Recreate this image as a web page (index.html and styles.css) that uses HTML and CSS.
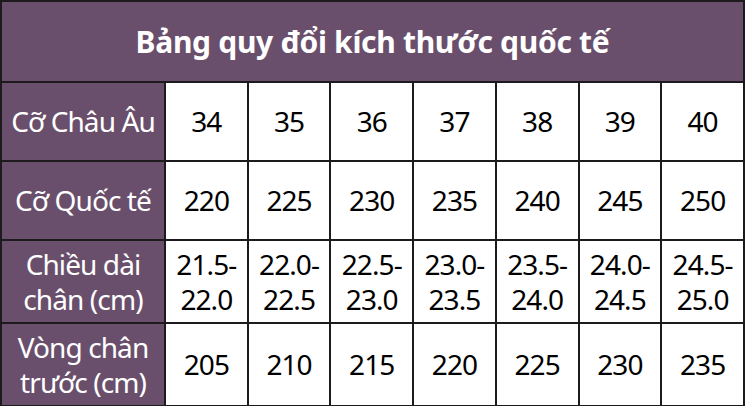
FILE: index.html
```html
<!DOCTYPE html>
<html lang="vi">
<head>
<meta charset="utf-8">
<link rel="stylesheet" href="styles.css">
</head>
<body>
<table class="size-table">
  <colgroup>
    <col class="col-label">
    <col><col><col><col><col><col><col>
  </colgroup>
  <tr class="row-title">
    <th colspan="8" class="title">Bảng quy đổi kích thước quốc tế</th>
  </tr>
  <tr class="row-a">
    <th class="label">Cỡ Châu Âu</th>
    <td>34</td><td>35</td><td>36</td><td>37</td><td>38</td><td>39</td><td>40</td>
  </tr>
  <tr class="row-a">
    <th class="label">Cỡ Quốc tế</th>
    <td>220</td><td>225</td><td>230</td><td>235</td><td>240</td><td>245</td><td>250</td>
  </tr>
  <tr class="row-b">
    <th class="label">Chiều dài<br>chân (cm)</th>
    <td>21.5-<br>22.0</td><td>22.0-<br>22.5</td><td>22.5-<br>23.0</td><td>23.0-<br>23.5</td><td>23.5-<br>24.0</td><td>24.0-<br>24.5</td><td>24.5-<br>25.0</td>
  </tr>
  <tr class="row-b">
    <th class="label">Vòng chân<br>trước (cm)</th>
    <td>205</td><td>210</td><td>215</td><td>220</td><td>225</td><td>230</td><td>235</td>
  </tr>
</table>
</body>
</html>
```

FILE: styles.css
```css
html, body {
  margin: 0;
  padding: 0;
  background: #ffffff;
}

.size-table {
  width: 745px;
  height: 406px;
  border-collapse: collapse;
  table-layout: fixed;
  font-family: "Noto Sans", "Open Sans", sans-serif;
  color: #000;
}

.col-label {
  width: 164px;
}

.size-table th,
.size-table td {
  border: 2px solid #1c1a1d;
  text-align: center;
  vertical-align: middle;
  padding: 0;
  font-size: 28px;
  line-height: 35px;
  font-weight: 400;
  letter-spacing: -0.9px;
}

.size-table td {
  background: #ffffff;
}

.row-title {
  height: 81px;
}

.row-a {
  height: 79px;
}

.row-b {
  height: 83px;
}

.title {
  background: #6a4f6c;
  color: #ffffff;
  font-weight: 700 !important;
  font-size: 30px !important;
  letter-spacing: -0.3px !important;
}

.label {
  background: #6a4f6c;
  color: #ffffff;
}
```
